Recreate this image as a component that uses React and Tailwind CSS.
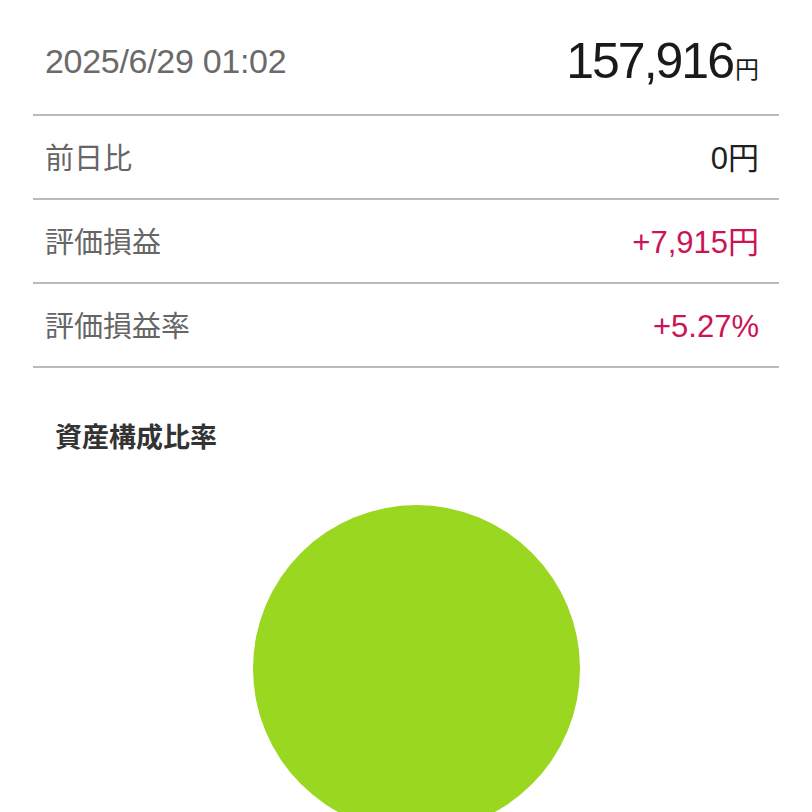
function Row({ label, value, valueClass }) {
  return (
    <div className="flex h-[84px] items-center justify-between border-b-2 border-[#b9b9c0] pl-[12px] pr-[20px] pt-[5px]">
      <span className="text-[29px] text-[#666666]">{label}</span>
      <span className={`text-[31px] ${valueClass}`}>{value}</span>
    </div>
  );
}

export default function App() {
  return (
    <div
      className="h-[812px] w-[812px] overflow-hidden bg-white"
      style={{ fontFamily: '"Liberation Sans", "Noto Sans CJK JP", sans-serif' }}
    >
      <div className="px-[33px]">
        {/* Header */}
        <div className="flex h-[116px] items-center justify-between border-b-2 border-[#b9b9c0] pl-[12px] pr-[20px] pt-[8px]">
          <span className="text-[34px] tracking-[-0.3px] text-[#6a6a6a]">2025/6/29 01:02</span>
          <span className="flex items-baseline text-[#1a1a1a]">
            <span className="text-[50px] tracking-[-2px]">157,916</span>
            <span className="ml-[2px] text-[24px]">円</span>
          </span>
        </div>

        <Row label="前日比" value="0円" valueClass="text-[#1f1f1f]" />
        <Row label="評価損益" value="+7,915円" valueClass="text-[#cc1356]" />
        <Row label="評価損益率" value="+5.27%" valueClass="text-[#cc1356]" />

        {/* 資産構成比率 */}
        <div className="pl-[22px] pt-[50px]">
          <h2 className="text-[27px] font-bold text-[#333333]">資産構成比率</h2>
        </div>

        <div className="pl-[220px] pt-[46px]">
          <div className="h-[327px] w-[327px] rounded-full bg-[#9ad720]" />
        </div>
      </div>
    </div>
  );
}
